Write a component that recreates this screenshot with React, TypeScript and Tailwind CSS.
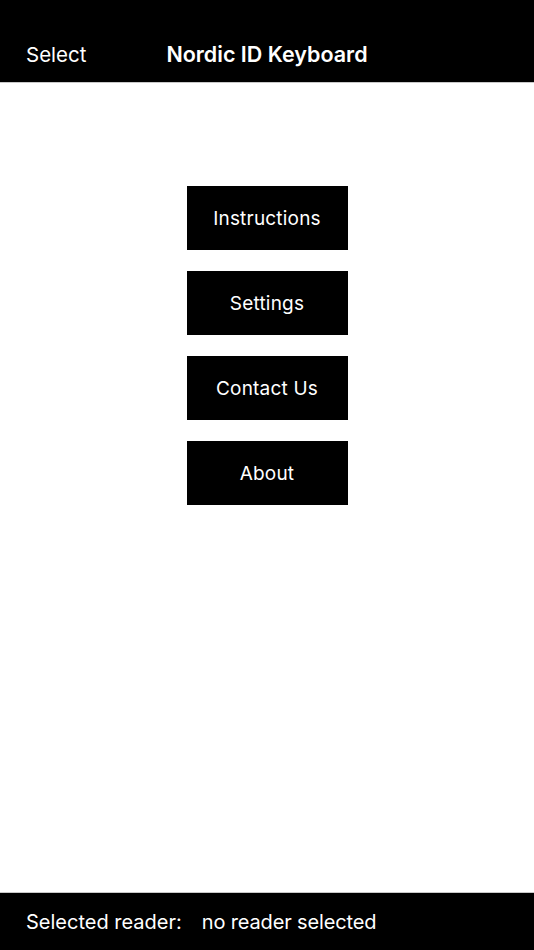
export default function App() {
  const items = ["Instructions", "Settings", "Contact Us", "About"];

  return (
    <div
      className="flex h-[950px] w-[534px] flex-col bg-white text-white"
      style={{ fontFamily: "Inter, 'Noto Sans', sans-serif" }}
    >
      {/* Nav bar */}
      <header className="relative flex h-[83px] shrink-0 items-end border-b border-[#c8c8c8] bg-black pb-[15px]">
        <span className="absolute left-[26px] bottom-[14px] text-[20.5px] leading-[26px]">
          Select
        </span>
        <h1 className="w-full text-center text-[21.5px] font-semibold leading-[26px]">
          Nordic ID Keyboard
        </h1>
      </header>

      {/* Menu */}
      <main className="flex flex-1 flex-col items-center gap-[21px] pt-[103px]">
        {items.map((label) => (
          <button
            key={label}
            className="flex h-[64px] w-[161px] items-center justify-center bg-black pt-[3px] text-[19px] tracking-[0.2px] text-white"
          >
            {label}
          </button>
        ))}
      </main>

      {/* Footer */}
      <footer className="flex h-[58px] shrink-0 items-center border-t border-[#c8c8c8] bg-black pl-[26px] text-[20px]">
        <span>Selected reader:</span>
        <span className="ml-[20px] tracking-[-0.15px]">no reader selected</span>
      </footer>
    </div>
  );
}
